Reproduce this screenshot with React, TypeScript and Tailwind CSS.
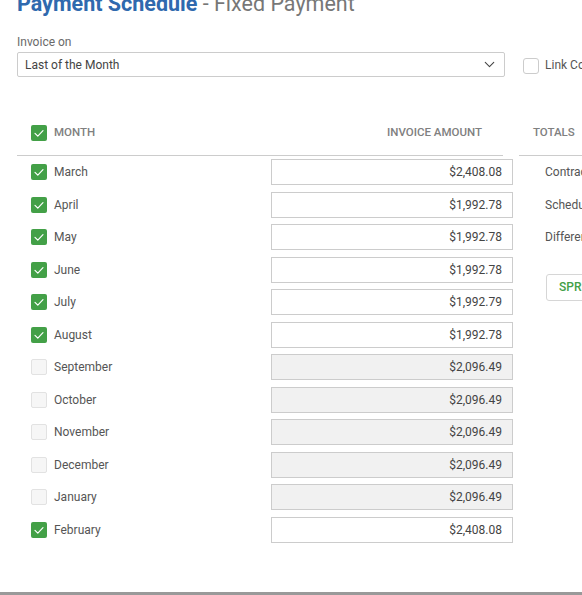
import React from "react";
import { ChevronDown } from "lucide-react";

type Row = { month: string; amount: string; checked: boolean };

const rows: Row[] = [
  { month: "March", amount: "$2,408.08", checked: true },
  { month: "April", amount: "$1,992.78", checked: true },
  { month: "May", amount: "$1,992.78", checked: true },
  { month: "June", amount: "$1,992.78", checked: true },
  { month: "July", amount: "$1,992.79", checked: true },
  { month: "August", amount: "$1,992.78", checked: true },
  { month: "September", amount: "$2,096.49", checked: false },
  { month: "October", amount: "$2,096.49", checked: false },
  { month: "November", amount: "$2,096.49", checked: false },
  { month: "December", amount: "$2,096.49", checked: false },
  { month: "January", amount: "$2,096.49", checked: false },
  { month: "February", amount: "$2,408.08", checked: true },
];

function Check({ checked }: { checked: boolean }) {
  if (!checked) {
    return (
      <span className="block w-[16px] h-[16px] rounded-[2px] border border-[#e2e2e2] bg-[#f6f6f6] shrink-0" />
    );
  }
  return (
    <span className="flex items-center justify-center w-[16px] h-[16px] rounded-[2px] bg-[#43a047] shrink-0">
      <svg width="16" height="16" viewBox="0 0 16 16" fill="none">
        <path
          d="M4 8.3l2.8 2.8L12 5.6"
          stroke="#ffffff"
          strokeWidth="1.2"
          strokeLinecap="round"
          strokeLinejoin="round"
        />
      </svg>
    </span>
  );
}

export default function App() {
  return (
    <div
      className="w-[582px] h-[595px] overflow-hidden bg-white border-b-[3px] border-[#999999]"
      style={{ fontFamily: "Roboto, 'Liberation Sans', sans-serif" }}
    >
      <div className="px-[17px] whitespace-nowrap">
        <h1 className="-mt-[9px] text-[21.5px] leading-[26px]">
          <span className="font-bold text-[#2f69ae]">Payment Schedule</span>
          <span className="text-[#777777]"> - Fixed Payment</span>
        </h1>

        <div className="mt-[17px] text-[12px] leading-[16px] text-[#6a6a6a]">Invoice on</div>

        <div className="mt-[2px] flex items-center">
          <div className="w-[488px] h-[25px] shrink-0 flex items-center justify-between border border-[#cccccc] rounded-[2px] pl-[7px] pr-[6px] text-[12px] text-[#444444]">
            <span>Last of the Month</span>
            <ChevronDown size={17} strokeWidth={1.5} className="text-[#444444]" />
          </div>
          <span className="ml-[18px] mt-[3px] block w-[16px] h-[16px] rounded-[3px] border border-[#cccccc] bg-white shrink-0" />
          <span className="ml-[6px] text-[12px] text-[#555555]">Link Contract Amount</span>
        </div>

        <div className="mt-[40px] flex gap-[16px]">
          <div className="w-[486px] shrink-0">
            <div className="h-[31px] grid grid-cols-[254px_242px] items-center text-[11.5px] font-medium text-[#808080]">
              <div className="flex items-center pl-[14px] gap-[7px]">
                <Check checked />
                <span>MONTH</span>
              </div>
              <div className="text-right pr-[31px]">INVOICE AMOUNT</div>
            </div>
            <div className="mt-[7px] h-px bg-[#cccccc]" />
            {rows.map((r) => (
              <div key={r.month} className="h-[32.5px] grid grid-cols-[254px_242px] items-center">
                <div className="flex items-center pl-[14px] gap-[7px] text-[12px] text-[#555555]">
                  <Check checked={r.checked} />
                  <span>{r.month}</span>
                </div>
                <div
                  className={
                    r.checked
                      ? "h-[26px] flex items-center justify-end pr-[10px] border border-[#cccccc] bg-white text-[12px] text-[#444444]"
                      : "h-[26px] flex items-center justify-end pr-[10px] border border-[#cccccc] bg-[#f1f1f1] text-[12px] text-[#444444]"
                  }
                >
                  {r.amount}
                </div>
              </div>
            ))}
          </div>

          <div className="flex-1 min-w-[200px]">
            <div className="h-[31px] flex items-center pl-[14px] text-[11.5px] font-medium text-[#808080]">
              TOTALS
            </div>
            <div className="mt-[7px] h-px bg-[#cccccc]" />
            <div className="h-[32.5px] flex items-center pl-[26px] text-[12px] text-[#555555]">Contract Amount</div>
            <div className="h-[32.5px] flex items-center pl-[26px] text-[12px] text-[#555555]">Scheduled Amount</div>
            <div className="h-[32.5px] flex items-center pl-[26px] text-[12px] text-[#555555]">Difference</div>
            <button className="ml-[27px] mt-[20px] h-[27px] px-[12px] border border-[#d6d6d6] rounded-[3px] bg-white text-[12px] font-medium text-[#43a047]">
              SPREAD DIFFERENCE
            </button>
          </div>
        </div>
      </div>
    </div>
  );
}
